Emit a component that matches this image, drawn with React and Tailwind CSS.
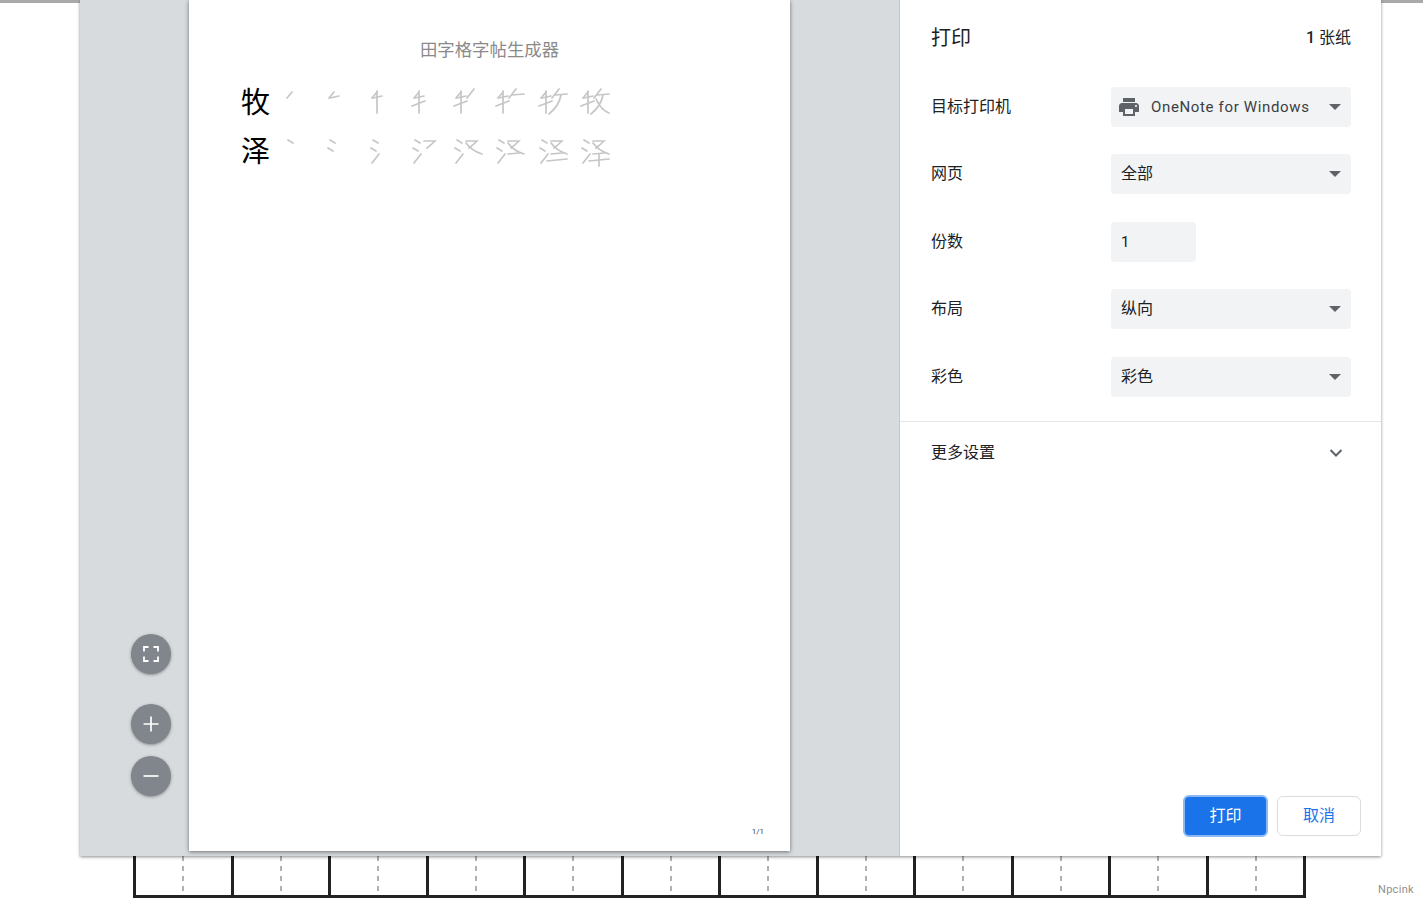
import React from "react";

const font = { fontFamily: '"Roboto","Noto Sans CJK SC",sans-serif' };

function Caret() {
  return <span className="w-0 h-0 border-l-[6px] border-r-[6px] border-t-[6px] border-l-transparent border-r-transparent border-t-[#5f6368]" />;
}

function Row({ label, children, h = "mb-[27.4px]" }) {
  return (
    <div className={`flex items-center h-[40px] ${h}`}>
      <div className="w-[180px] text-[16px] text-[#202124]">{label}</div>
      {children}
    </div>
  );
}

function Select({ value, icon }) {
  return (
    <div className={`w-[240px] h-[40px] rounded bg-[#f1f3f4] flex items-center justify-between text-[16px] text-[#202124] ${icon ? "pl-[6px]" : "pl-[10px]"} pr-[10px]`}>
      <div className="flex items-center">
        {icon && (
          <svg width="24" height="24" viewBox="0 0 24 24" className="mr-[10px]" fill="#5f6368">
            <path d="M19 8H5c-1.66 0-3 1.34-3 3v6h4v4h12v-4h4v-6c0-1.66-1.34-3-3-3zm-3 11H8v-5h8v5zm3-7c-.55 0-1-.45-1-1s.45-1 1-1 1 .45 1 1-.45 1-1 1zm-1-9H6v4h12V3z" />
          </svg>
        )}
        <span className={icon ? "text-[15px] tracking-[0.65px] text-[#3c4043]" : ""}>{value}</span>
      </div>
      <Caret />
    </div>
  );
}

function RoundBtn({ children, className = "" }) {
  return (
    <div className={`w-[40px] h-[40px] rounded-full bg-[#80868b] flex items-center justify-center shadow-[0_1px_3px_rgba(60,64,67,0.5)] ${className}`}>
      {children}
    </div>
  );
}

/* stroke-order drawings, each in a 32x32 box */
const M = {
  a: "M7 6 L2 12",
  b: "M3 12 L12 10",
  c: "M7 5 L7 27",
  d: "M0 20 L13 15",
  e: "M20 3 L13 12",
  f: "M16 9 L28 8",
  g: "M22 9 Q20 20 10 28",
  h: "M15 13 Q20 24 28 27",
};
const Z = {
  a: "M3 5 L8 8",
  b: "M1 13 L6 16",
  c: "M2 28 L9 19",
  d: "M12 6 L23 6 Q19 10 15 13",
  e: "M12 8 Q18 16 28 19",
  f: "M12 19 L23 18",
  g: "M8 26 L28 24",
  h: "M18 19 L18 31",
};
const steps = ["a", "ab", "abc", "abcd", "abcde", "abcdef", "abcdefg", "abcdefgh"];

function Strokes({ map, keys }) {
  return (
    <svg width="32" height="32" viewBox="0 0 32 32" className="block overflow-visible">
      {keys.split("").map((k) => (
        <path key={k} d={map[k]} fill="none" stroke="#c6c6c6" strokeWidth="1.7" strokeLinecap="round" />
      ))}
    </svg>
  );
}

function Chars({ ch, map, mb }) {
  return (
    <div className={`flex items-center h-[32px] ${mb}`}>
      <span className="w-[44px] mt-[2px] text-[29px] leading-[32px] text-black">{ch}</span>
      <div className="flex gap-[10.3px]">
        {steps.map((k, i) => (
          <Strokes key={i} map={map} keys={k} />
        ))}
      </div>
    </div>
  );
}

function Cell() {
  return (
    <div className="w-[97.6px] h-full border-l-[3px] border-[#222] flex">
      <div className="w-[46px]" />
      <div className="h-full w-[2px] bg-[repeating-linear-gradient(to_bottom,#b0b0b0_0,#b0b0b0_5px,transparent_5px,transparent_10px)]" />
    </div>
  );
}

export default function App() {
  return (
    <div className="relative w-[1423px] h-[905px] bg-white overflow-hidden" style={font}>
      <div className="absolute top-0 left-0 right-0 h-[3px] bg-[#a9a9a9]" />

      {/* dialog */}
      <div className="relative ml-[80px] w-[1301px] h-[856px] flex bg-white shadow-[0_1px_3px_rgba(0,0,0,0.45)]">
        <div className="w-[819px] h-full bg-[#d8dbde] flex">
          <div className="w-[109px] h-full flex flex-col items-end pr-[18px] pt-[634px] shrink-0">
            <RoundBtn className="mb-[30px]">
              <svg width="16" height="16" viewBox="0 0 16 16" fill="none" stroke="#fff" strokeWidth="1.8">
                <path d="M1 5.5V1h4.5 M10.5 1H15v4.5 M15 10.5V15h-4.5 M5.5 15H1v-4.5" />
              </svg>
            </RoundBtn>
            <RoundBtn className="mb-[12px]">
              <svg width="16" height="16" viewBox="0 0 16 16" stroke="#fff" strokeWidth="1.7">
                <path d="M8 .5v15 M.5 8h15" />
              </svg>
            </RoundBtn>
            <RoundBtn>
              <svg width="16" height="16" viewBox="0 0 16 16" stroke="#fff" strokeWidth="1.7">
                <path d="M.5 8h15" />
              </svg>
            </RoundBtn>
          </div>

          <div className="relative w-[601px] h-[851px] bg-white shadow-[0_1px_4px_rgba(0,0,0,0.5)]">
            <div className="pt-[39px] text-center text-[17.4px] leading-[22px] text-[#8a8a8a]">田字格字帖生成器</div>
            <div className="pl-[52px] pt-[25px]">
              <Chars ch="牧" map={M} mb="mb-[17px]" />
              <Chars ch="泽" map={Z} mb="" />
            </div>
            <div className="absolute right-[26px] bottom-[13px] text-[8px] text-[#444]">1/1</div>
          </div>
        </div>

        {/* sidebar */}
        <div className="flex-1 border-l border-[#c6c8ca] flex flex-col">
          <div className="flex items-center justify-between pl-[31px] pr-[30px] pt-[24px] pb-[35px] h-[87px]">
            <span className="text-[20px] text-[#202124]">打印</span>
            <span className="text-[16px] text-[#202124]"><span className="font-medium">1</span> 张纸</span>
          </div>
          <div className="pl-[31px] pr-[30px]">
            <Row label="目标打印机"><Select value="OneNote for Windows" icon /></Row>
            <Row label="网页"><Select value="全部" /></Row>
            <Row label="份数">
              <div className="w-[85px] h-[40px] rounded bg-[#f1f3f4] flex items-center pl-[10px] text-[15px] text-[#202124]">1</div>
            </Row>
            <Row label="布局"><Select value="纵向" /></Row>
            <Row label="彩色" h="mb-0"><Select value="彩色" /></Row>
          </div>
          <div className="mt-[24.4px] border-t border-[#e3e5e7] h-[62px] pt-[1px] pl-[31px] pr-[30px] flex items-center justify-between">
            <span className="text-[16px] text-[#202124]">更多设置</span>
            <svg width="14" height="10" viewBox="0 0 14 10" fill="none" stroke="#5f6368" strokeWidth="2" className="mr-[8px]">
              <path d="M1.5 2 L7 7.5 L12.5 2" />
            </svg>
          </div>
          <div className="flex-1" />
          <div className="flex justify-end gap-[9px] pr-[20px] pb-[19px]">
            <div className="w-[85px] h-[42px] rounded-[6px] bg-[#1a73e8] border-2 border-[#8ab9f5] flex items-center justify-center text-white text-[16px]">打印</div>
            <div className="w-[84px] h-[40px] mt-[1px] rounded-[6px] bg-white border border-[#dadce0] flex items-center justify-center text-[#1a73e8] text-[16px]">取消</div>
          </div>
        </div>
      </div>

      {/* writing grid behind the dialog */}
      <div className="flex items-end">
        <div className="ml-[133px] w-[1173px] h-[42px] flex border-b-[3px] border-r-[3px] border-[#222] box-border">
          {Array.from({ length: 12 }, (_, i) => <Cell key={i} />)}
        </div>
        <span className="ml-[72px] text-[11px] tracking-[0.3px] text-[#8f8f8f]">Npcink</span>
      </div>
    </div>
  );
}
